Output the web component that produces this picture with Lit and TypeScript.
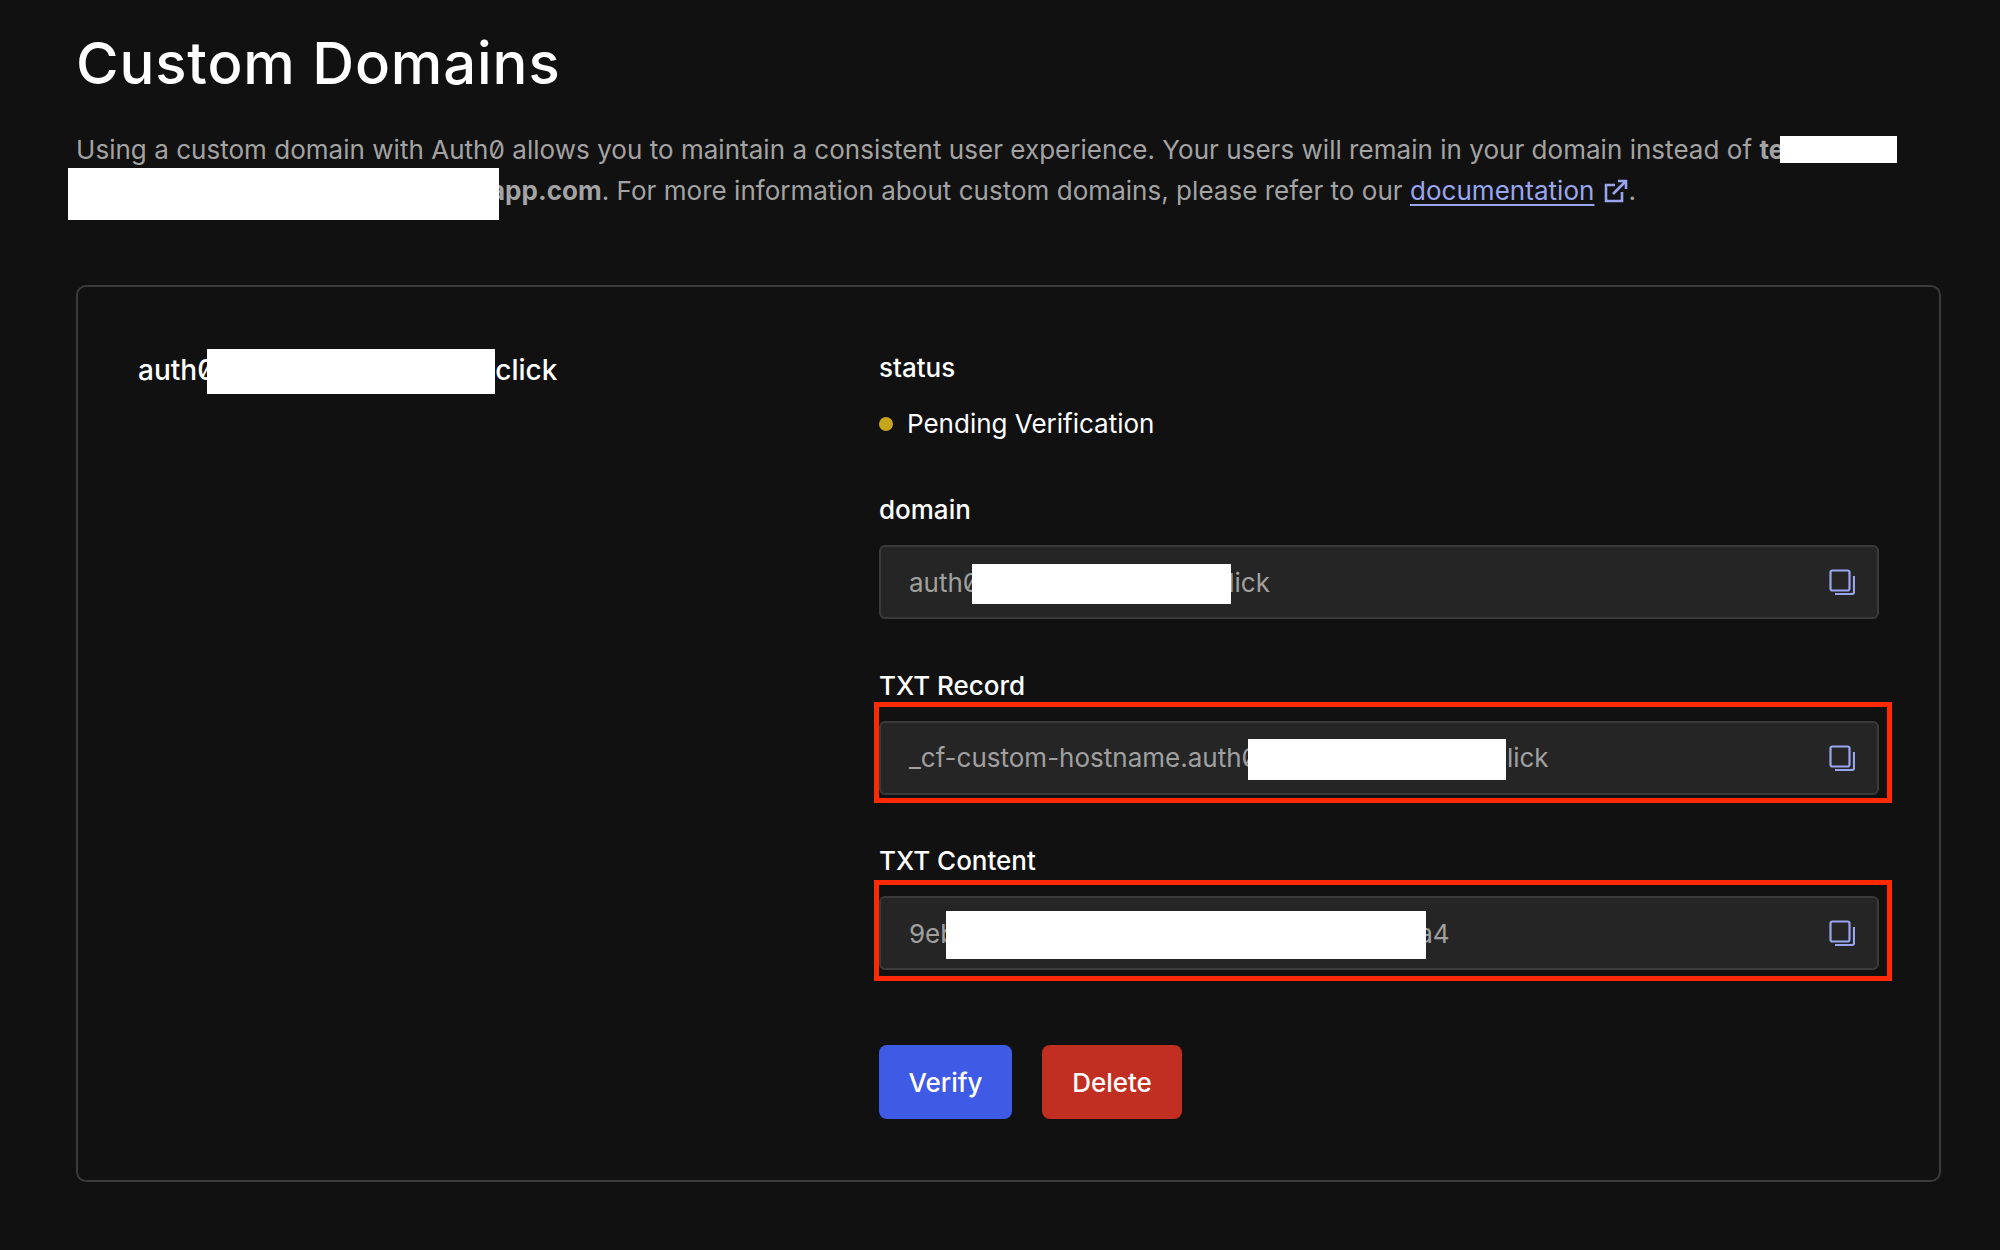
import { html, css, svg, LitElement } from 'lit';
import { customElement } from 'lit/decorators.js';

const copyIcon = svg`<svg class="copy" width="26" height="26" viewBox="0 0 26 26" fill="none" stroke="currentColor" stroke-width="2.2">
    <rect x="1.5" y="1.5" width="19" height="20" rx="2"/>
    <path d="M25 7v16a2 2 0 0 1-2 2H6"/>
</svg>`;

const externalIcon = svg`<svg class="ext" width="24" height="24" viewBox="0 0 24 24" fill="none" stroke="currentColor" stroke-width="2.6">
    <path d="M11 6H2v16h16v-9"/>
    <path d="M9 15 22 2"/>
    <path d="M14 2h8v8"/>
</svg>`;

@customElement('app-root')
export class AppRoot extends LitElement {
    static styles = css`
        :host {
            display: block;
            min-height: 1250px;
            background: #111111;
            color: #fff;
            font-family: Inter, "Liberation Sans", sans-serif;
            font-feature-settings: 'zero';
            box-sizing: border-box;
            padding: 25px 59px 0 76px;
            overflow: hidden;
        }
        h1 {
            margin: 0;
            font-size: 58px;
            font-weight: 500;
            line-height: 76px;
            letter-spacing: 0.9px;
        }
        p {
            margin: 28px 0 0;
            font-size: 26px;
            line-height: 41px;
            letter-spacing: 0.03px;
            color: #a3a3a3;
        }
        p b { font-weight: 700; }
        p a { color: #99a6ef; text-decoration: underline; text-underline-offset: 4px; }
        .ext { vertical-align: -3px; margin-left: 10px; color: #99a6ef; }
        .redact {
            display: inline-block;
            background: #fff;
            position: relative;
            z-index: 1;
            vertical-align: middle;
        }
        .r-te { width: 117px; height: 27px; margin: -8px 0 -8px -4px; top: -2px; }
        .r-host { width: 431px; height: 52px; margin: -12px -9px -12px -8px; top: 1px; }
        .r-name { width: 288px; height: 45px; margin: -10px 0 -10px -8px; top: -1px; }
        .r-domain { width: 259px; height: 40px; margin: -8px -3px -8px -7px; }
        .r-record { width: 258px; height: 41px; margin: -8px 1px -8px -10px; }
        .r-content { width: 480px; height: 48px; margin: -12px -8px -12px -10px; }
        .card {
            margin-top: 74px;
            height: 897px;
            box-sizing: border-box;
            border: 2px solid #3a3a3a;
            border-radius: 10px;
            padding: 65px 60px 0 60px;
            display: grid;
            grid-template-columns: 741px 1fr;
        }
        .name { font-size: 28px; font-weight: 500; line-height: 36px; white-space: nowrap; }
        .label { font-size: 26px; line-height: 32px; font-weight: 500; }
        .status {
            display: flex;
            align-items: center;
            gap: 14px;
            margin-top: 24px;
            font-size: 26px;
            line-height: 32px;
        }
        .dot { width: 14px; height: 14px; border-radius: 50%; background: #c4a51c; }
        .field { margin-top: 54px; }
        .field + .field { margin-top: 50.5px; }
        .field .label { margin-bottom: 19px; }
        .input {
            position: relative;
            height: 74px;
            box-sizing: border-box;
            background: #252525;
            border: 2px solid #3a3a3a;
            border-radius: 6px;
            padding: 0 22px 0 28px;
            display: flex;
            align-items: center;
            justify-content: space-between;
            font-size: 26px;
            color: #a0a0a0;
        }
        .value { white-space: nowrap; }
        .copy { color: #99a6ef; }
        .mark {
            position: absolute;
            border: 5px solid #ff2a00;
            pointer-events: none;
        }
        .mark-record { inset: -21px -15px -10px -7px; }
        .mark-content { inset: -18px -15px -13px -7px; }
        .actions { display: flex; gap: 30px; margin-top: 75px; }
        button {
            height: 74px;
            border: none;
            border-radius: 8px;
            color: #fff;
            font: 500 26px Inter, "Liberation Sans", sans-serif;
        }
        .verify { width: 133px; background: #3f5be5; }
        .delete { width: 140px; background: #c12f23; }
    `;

    render() {
        return html`
            <h1>Custom Domains</h1>
            <p>Using a custom domain with Auth0 allows you to maintain a consistent user experience. Your users will remain in your domain instead of <b>te<span class="redact r-te"></span> <span class="redact r-host"></span>app.com</b>. For more information about custom domains, please refer to our <a href="#">documentation</a>${externalIcon}.</p>
            <div class="card">
                <div class="name">auth0<span class="redact r-name"></span>click</div>
                <div>
                    <div class="label">status</div>
                    <div class="status"><span class="dot"></span>Pending Verification</div>
                    <div class="field">
                        <div class="label">domain</div>
                        <div class="input">
                            <span class="value">auth0<span class="redact r-domain"></span>lick</span>
                            ${copyIcon}
                        </div>
                    </div>
                    <div class="field">
                        <div class="label">TXT Record</div>
                        <div class="input">
                            <span class="value">_cf-custom-hostname.auth0<span class="redact r-record"></span>lick</span>
                            ${copyIcon}
                            <span class="mark mark-record"></span>
                        </div>
                    </div>
                    <div class="field">
                        <div class="label">TXT Content</div>
                        <div class="input">
                            <span class="value">9eb<span class="redact r-content"></span>a4</span>
                            ${copyIcon}
                            <span class="mark mark-content"></span>
                        </div>
                    </div>
                    <div class="actions">
                        <button class="verify">Verify</button>
                        <button class="delete">Delete</button>
                    </div>
                </div>
            </div>
        `;
    }
}
